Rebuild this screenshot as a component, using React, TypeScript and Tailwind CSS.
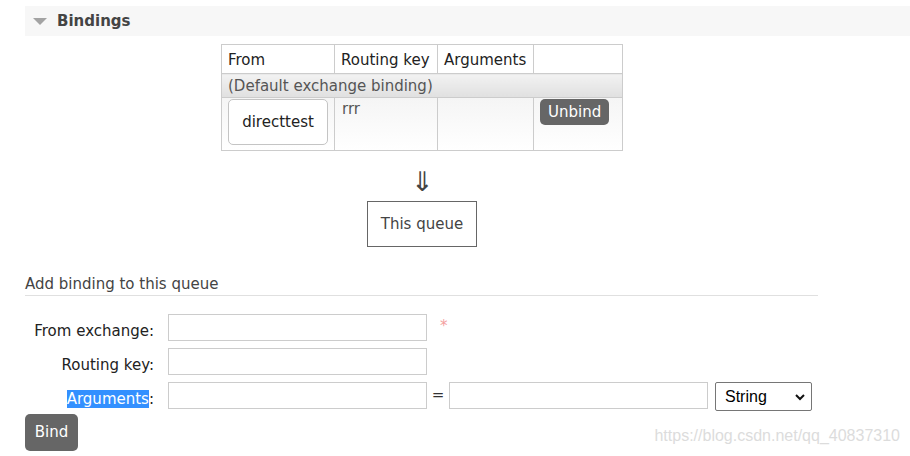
import React from 'react'

const font = { fontFamily: '"DejaVu Sans", Verdana, sans-serif' }

function Field({ className = '' }: { className?: string }) {
  return <div className={`h-[27px] w-[259px] shrink-0 border border-[#cccccc] bg-white ${className}`} />
}

export default function App() {
  return (
    <div className="relative h-[456px] w-[910px] overflow-hidden bg-white text-[15px] text-[#222]" style={font}>
      <div className="pl-[25px] pt-[6px]">
        {/* section header */}
        <div className="flex h-[30px] items-center bg-[#f7f7f7] pl-[8px]">
          <span className="h-0 w-0 border-x-[7px] border-t-[7px] border-x-transparent border-t-[#a3a3a3]" />
          <span className="ml-[10px] text-[15px] font-bold text-[#444]">Bindings</span>
        </div>

        {/* bindings table */}
        <div className="ml-[196px] mt-[8px] flex w-[402px] flex-col items-center">
          <table className="w-[402px] border-collapse text-[15px]">
            <thead>
              <tr className="h-[29px]">
                <th className="w-[113px] border border-[#cccccc] px-[6px] pt-[3px] text-left font-normal">From</th>
                <th className="w-[103px] border border-[#cccccc] px-[6px] pt-[3px] text-left font-normal">Routing key</th>
                <th className="w-[96px] border border-[#cccccc] px-[6px] pt-[3px] text-left font-normal">Arguments</th>
                <th className="border border-[#cccccc]" />
              </tr>
            </thead>
            <tbody>
              <tr className="h-[24px]">
                <td colSpan={4} className="border border-[#cccccc] bg-gradient-to-b from-[#f2f2f2] to-[#e0e0e0] px-[6px] leading-[20px] text-[#555]">
                  (Default exchange binding)
                </td>
              </tr>
              <tr className="h-[53px] bg-gradient-to-b from-[#f5f5f5] to-white align-top">
                <td className="border border-[#cccccc] px-[6px] pt-[1px]">
                  <div className="flex h-[46px] w-[100px] items-center justify-center rounded-[5px] border border-[#c4c4c4] bg-white">
                    directtest
                  </div>
                </td>
                <td className="border border-[#cccccc] px-[7px] pt-[1px] leading-[20px] text-[#555]">rrr</td>
                <td className="border border-[#cccccc]" />
                <td className="border border-[#cccccc] px-[6px] pt-[1px]">
                  <span className="inline-flex h-[26px] items-center rounded-[5px] bg-[#666] px-[8px] text-[#fff]">Unbind</span>
                </td>
              </tr>
            </tbody>
          </table>

          <div className="mt-[14px] text-[27px] font-light leading-[34px] text-[#444]">⇓</div>
          <div className="mt-[2px] flex h-[46px] w-[110px] items-center justify-center border border-[#666] text-[#444]">
            This queue
          </div>
        </div>

        {/* add binding form */}
        <div className="mt-[27px] w-[793px] border-b border-[#e0e0e0] pb-[1px] leading-[20px] text-[#444]">
          Add binding to this queue
        </div>

        <div className="mt-[18px] flex flex-col gap-[7px]">
          <div className="flex items-start">
            <span className="mt-[8px] w-[129px] shrink-0 text-right leading-[18px]">From exchange:</span>
            <Field className="ml-[14px]" />
            <span className="ml-[13px] mt-[3px] leading-[18px] text-[#f4a0a0]">*</span>
          </div>
          <div className="flex items-start">
            <span className="mt-[8px] w-[129px] shrink-0 text-right leading-[18px]">Routing key:</span>
            <Field className="ml-[14px]" />
          </div>
          <div className="flex items-start">
            <span className="mt-[8px] w-[129px] shrink-0 text-right leading-[18px]">
              <span className="bg-[#3390ff] text-white">Arguments</span>:
            </span>
            <Field className="ml-[14px]" />
            <span className="mt-[4px] w-[22px] shrink-0 text-center leading-[18px] text-[#333]">=</span>
            <Field />
            <div
              className="ml-[7px] flex h-[29px] w-[97px] shrink-0 items-center justify-between rounded-[2px] border border-[#767676] pl-[9px] pr-[5px] text-[16px] text-black"
              style={{ fontFamily: '"Liberation Sans", Arial, sans-serif' }}
            >
              String
              <svg width="12" height="12" viewBox="0 0 12 12">
                <path d="M2 4l4 4 4-4" fill="none" stroke="#111" strokeWidth="2" />
              </svg>
            </div>
          </div>
        </div>

        <button className="mt-[3px] flex h-[37px] w-[53px] items-center justify-center rounded-[5px] bg-[#666] text-[15px] text-white">
          Bind
        </button>
      </div>

      <div
        className="absolute bottom-[8px] right-[10px] text-[16px] text-[#dcdcdc]"
        style={{ fontFamily: '"Liberation Sans", Arial, sans-serif' }}
      >
        https://blog.csdn.net/qq_40837310
      </div>
    </div>
  )
}
